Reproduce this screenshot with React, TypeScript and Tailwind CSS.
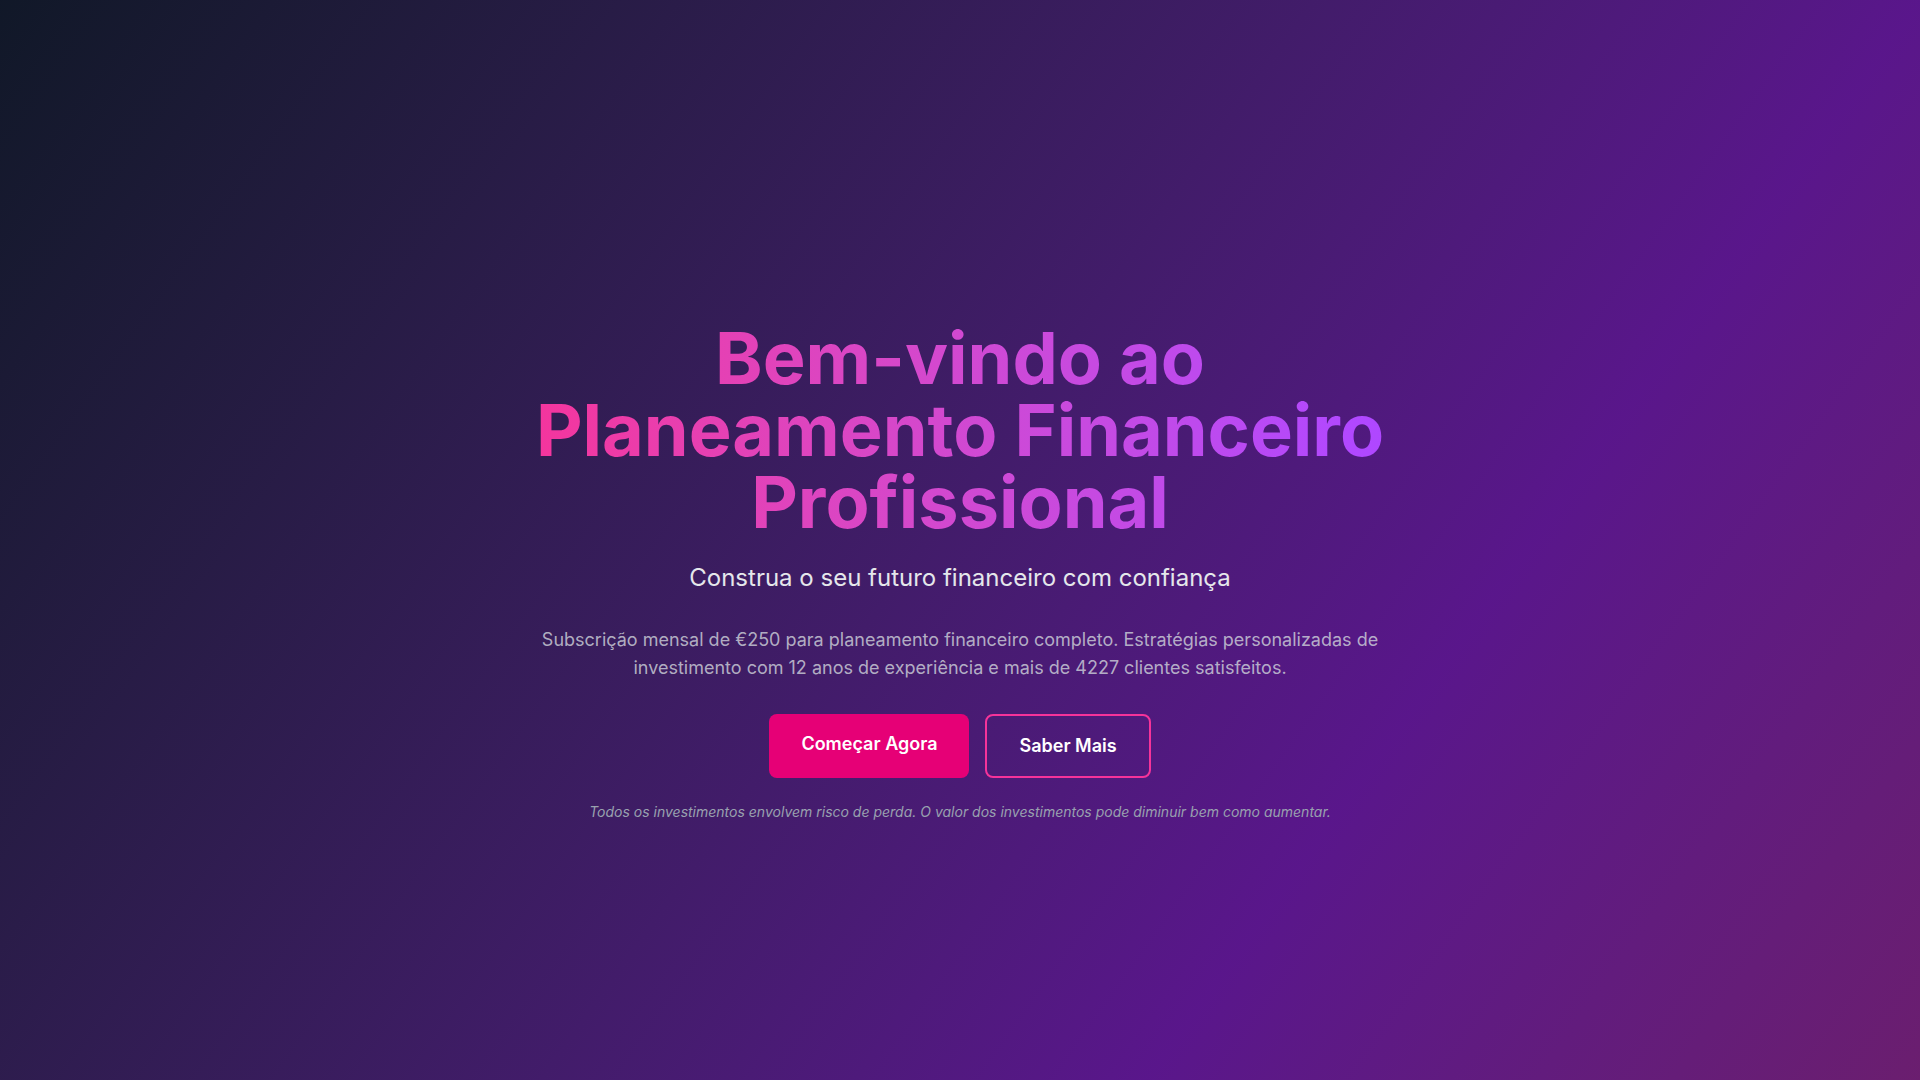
import React from "react";

const features = [
  {
    title: "Planeamento Personalizado",
    text: "Um plano financeiro feito à sua medida, revisto todos os meses com o seu consultor.",
  },
  {
    title: "Estratégias de Investimento",
    text: "Carteiras diversificadas ajustadas ao seu perfil de risco e aos seus objetivos.",
  },
  {
    title: "Acompanhamento Contínuo",
    text: "Relatórios mensais e apoio dedicado sempre que precisar de tomar uma decisão.",
  },
];

const App = () => {
  return (
    <div className="min-h-screen bg-linear-to-br from-gray-900 via-purple-900 to-pink-900 font-['Inter','Noto_Sans',sans-serif] text-white">
      {/* Hero */}
      <section className="flex min-h-screen items-center justify-center px-4 pt-16">
        <div className="mx-auto max-w-4xl text-center">
          <h1 className="mb-6 bg-linear-to-r from-pink-500 to-purple-500 bg-clip-text text-7xl font-bold text-transparent">
            Bem-vindo ao Planeamento Financeiro Profissional
          </h1>
          <p className="mb-8 text-2xl text-gray-200">
            Construa o seu futuro financeiro com confiança
          </p>
          <p className="mb-8 text-lg text-gray-300/80">
            Subscrição mensal de €250 para planeamento financeiro completo. Estratégias personalizadas de
            investimento com 12 anos de experiência e mais de 4227 clientes satisfeitos.
          </p>
          <div className="flex justify-center gap-4">
            <a href="#comecar" className="rounded-lg bg-pink-600 px-8 py-4 text-lg font-semibold text-white hover:bg-pink-700">
              Começar Agora
            </a>
            <button className="rounded-lg border-2 border-pink-500 px-8 py-4 text-lg font-semibold text-white hover:bg-pink-500/10">
              Saber Mais
            </button>
          </div>
          <p className="mt-6 text-sm italic text-gray-400">
            Todos os investimentos envolvem risco de perda. O valor dos investimentos pode diminuir bem como aumentar.
          </p>
        </div>
      </section>

      {/* Serviços */}
      <section id="comecar" className="px-4 py-24">
        <div className="mx-auto max-w-6xl">
          <h2 className="mb-12 text-center text-4xl font-bold">Porquê escolher-nos</h2>
          <div className="grid grid-cols-3 gap-8">
            {features.map((f) => (
              <div key={f.title} className="rounded-xl border border-white/10 bg-white/5 p-8">
                <h3 className="mb-3 text-xl font-semibold text-pink-400">{f.title}</h3>
                <p className="text-gray-300">{f.text}</p>
              </div>
            ))}
          </div>
        </div>
      </section>

      {/* Preço */}
      <section className="px-4 py-24">
        <div className="mx-auto max-w-xl rounded-2xl border border-pink-500/40 bg-white/5 p-10 text-center">
          <h2 className="mb-4 text-3xl font-bold">Subscrição Mensal</h2>
          <p className="mb-2 text-6xl font-bold text-pink-400">€250</p>
          <p className="mb-8 text-gray-300">por mês, sem fidelização</p>
          <ul className="mb-8 space-y-3 text-left text-gray-200">
            <li>✓ Plano financeiro completo</li>
            <li>✓ Reuniões mensais com consultor</li>
            <li>✓ Gestão de carteira de investimentos</li>
            <li>✓ Planeamento de reforma e impostos</li>
          </ul>
          <button className="w-full rounded-lg bg-pink-600 py-4 text-lg font-semibold">Subscrever</button>
        </div>
      </section>

      {/* Contacto */}
      <section className="px-4 py-24">
        <div className="mx-auto max-w-3xl text-center">
          <h2 className="mb-4 text-3xl font-bold">Fale connosco</h2>
          <p className="mb-8 text-gray-300">
            Agende uma consulta gratuita e descubra como podemos ajudar a alcançar os seus objetivos.
          </p>
          <button className="rounded-lg border-2 border-pink-500 px-8 py-4 text-lg font-semibold">Agendar Consulta</button>
        </div>
      </section>

      <footer className="border-t border-white/10 px-4 py-10 text-center text-sm text-gray-400">
        © 2024 Planeamento Financeiro Profissional. Todos os direitos reservados.
      </footer>
    </div>
  );
};

export default App;
